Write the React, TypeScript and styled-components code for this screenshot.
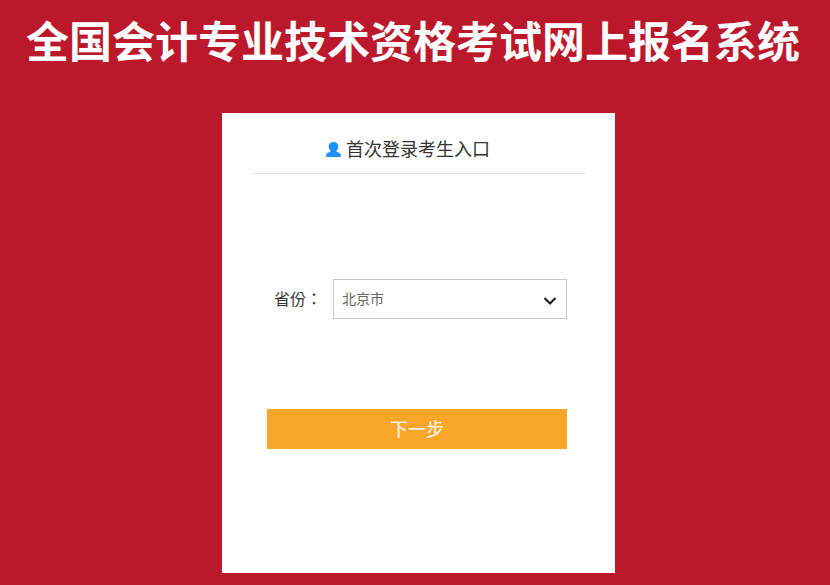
import React from 'react'
import styled, { createGlobalStyle } from 'styled-components'

const GlobalStyle = createGlobalStyle`
  html, body {
    margin: 0;
    padding: 0;
    height: 100%;
    overflow: hidden;
    background-color: #bb192b;
    font-family: "Liberation Sans", "Noto Sans CJK SC", sans-serif;
  }
`

const Page = styled.div`
  width: 830px;
  height: 585px;
  display: flex;
  flex-direction: column;
  align-items: center;
  background-color: #bb192b;
  overflow: hidden;
`

const Title = styled.h1`
  margin: 0 4px 0 0;
  padding-top: 13px;
  height: 100px;
  box-sizing: border-box;
  font-size: 43px;
  line-height: 60px;
  font-weight: 700;
  color: #fff;
  text-align: center;
  white-space: nowrap;
`

const Card = styled.div`
  width: 393px;
  height: 460px;
  margin-top: 13px;
  margin-left: 7px;
  box-sizing: border-box;
  padding: 0 30px 0 29px;
  background-color: #fff;
`

const CardHeader = styled.div`
  height: 51px;
  padding: 9px 20px 0 0;
  display: flex;
  align-items: center;
  justify-content: center;
  gap: 5px;
  border-bottom: 1px solid #e6e6e6;
  font-size: 18px;
  color: #333;
`

const UserIcon = styled.svg`
  width: 15px;
  height: 15px;
  margin-top: 3px;
  fill: #1e90ff;
`

const FormRow = styled.div`
  display: flex;
  align-items: center;
  margin-top: 105px;
  padding-left: 23px;
  height: 40px;
`

const Label = styled.label`
  width: 59px;
  margin-top: -2px;
  font-family: "Liberation Sans", "Noto Sans CJK TC", sans-serif;
  font-size: 16px;
  color: #333;
  white-space: nowrap;
`

const SelectBox = styled.div`
  width: 234px;
  height: 40px;
  box-sizing: border-box;
  display: flex;
  align-items: center;
  justify-content: space-between;
  padding: 0 9px 2px 8px;
  border: 1px solid #c8c8c8;
  font-size: 14px;
  color: #666;
`

const Chevron = styled.svg`
  width: 14px;
  height: 14px;
  margin-top: 5px;
  fill: none;
  stroke: #222;
  stroke-width: 2.2;
`

const NextButton = styled.button`
  display: block;
  width: 300px;
  height: 40px;
  margin: 90px 0 0 16px;
  padding: 0 0 2px;
  border: 0;
  background-color: #f9a728;
  color: #fff;
  font-family: inherit;
  font-size: 18px;
`

export default function App() {
  return (
    <Page>
      <GlobalStyle />
      <Title>全国会计专业技术资格考试网上报名系统</Title>
      <Card>
        <CardHeader>
          <UserIcon viewBox="0 0 15 15">
            <path d="M7.500 0c3 0 4.800 2 4.800 4.500 0 1.800-.8 3.300-1.900 4.200v.6c0 .8 2.600 1 3.700 2.300.6.700.8 1.900.8 3.400H.1c0-1.500.2-2.700.8-3.400 1.100-1.300 3.700-1.500 3.700-2.300v-.6C3.500 7.800 2.700 6.300 2.700 4.500 2.700 2 4.500 0 7.500 0z" />
          </UserIcon>
          首次登录考生入口
        </CardHeader>
        <FormRow>
          <Label>省份：</Label>
          <SelectBox>
            北京市
            <Chevron viewBox="0 0 14 14">
              <path d="M1.500 4l5.500 5.500L12.500 4" />
            </Chevron>
          </SelectBox>
        </FormRow>
        <NextButton>下一步</NextButton>
      </Card>
    </Page>
  )
}
